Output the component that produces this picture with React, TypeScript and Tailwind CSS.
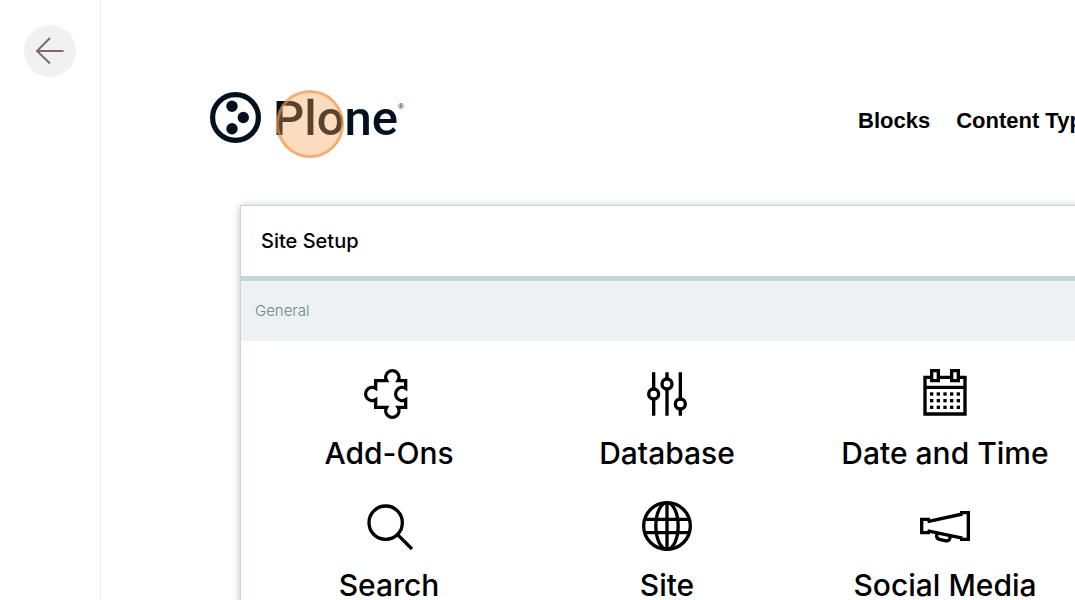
import type { ReactNode } from "react";

type Panel = { label: string; icon: ReactNode };

function PanelIcon({ children }: { children: ReactNode }) {
  return (
    <svg viewBox="0 0 36 36" className="size-[60px]" fill="none" stroke="#000" strokeWidth="2" aria-hidden="true">
      {children}
    </svg>
  );
}

const dotRows = [17, 21, 25];
const dotColumns = [9, 13, 17, 21, 25];

const panels: Panel[] = [
  {
    label: "Add-Ons",
    icon: (
      <path d="M10 10H16.54A4 4 0 1 1 23.46 10H28V14.54A4 4 0 1 0 28 21.46V26H23.46A4 4 0 1 1 16.54 26H10V21.46A4 4 0 1 1 10 14.54Z" />
    ),
  },
  {
    label: "Database",
    icon: (
      <>
        <path d="M10 5V15M10 21V31M18 5V9M18 15V31M26 5V21M26 27V31" />
        <circle cx="10" cy="18" r="3" />
        <circle cx="18" cy="12" r="3" />
        <circle cx="26" cy="24" r="3" />
      </>
    ),
  },
  {
    label: "Date and Time",
    icon: (
      <>
        <path d="M10 8H6V30H30V8H26M14 8H22M6 14H30" />
        <path d="M10 4H14V10H10ZM22 4H26V10H22Z" />
        {dotRows.map((y) =>
          dotColumns.map((x) => <rect key={`${x}-${y}`} x={x} y={y} width="2" height="2" fill="#000" stroke="none" />),
        )}
      </>
    ),
  },
  {
    label: "Search",
    icon: (
      <>
        <circle cx="16" cy="16" r="10" />
        <path d="M23 23L31.8 31.8" />
      </>
    ),
  },
  {
    label: "Site",
    icon: (
      <>
        <circle cx="18" cy="18" r="14" />
        <ellipse cx="18" cy="18" rx="6.7" ry="14" />
        <path d="M18 4V32M5 14H31M5 22H31" />
      </>
    ),
  },
  {
    label: "Social Media",
    icon: (
      <>
        <path d="M9 14H4V22H9M27 10H32V26H27" />
        <path d="M7.5 15.4L28.5 10.8M7.5 20.9L28.5 25.3" />
        <path d="M13.2 22.4L13 23.7Q12.8 25.6 14.6 26L18.6 26.9Q20.4 27.2 20.9 25.4L21.2 24.2" />
      </>
    ),
  },
];

export default function App() {
  return (
    <div className="flex h-screen overflow-hidden bg-white font-['Inter',sans-serif] text-black">
      <aside className="w-[101px] shrink-0 border-r border-[#eeeeee] px-6 pt-[25px]">
        <button type="button" aria-label="Back" className="flex size-[52px] items-center justify-center rounded-full bg-[#f1f1f1]">
          <svg viewBox="0 0 52 52" className="size-[52px]" fill="none" stroke="#826a6a" strokeWidth="2" aria-hidden="true">
            <path d="M39.5 26H13M26 13L13 26L26 38.5" />
          </svg>
        </button>
      </aside>

      <main className="min-w-0 flex-1 overflow-hidden">
        <header className="flex items-center pt-[89px] pl-[109px]">
          <a href="#home" aria-label="Plone home" className="relative flex h-[56px] shrink-0 items-center text-[#03111f]">
            <svg viewBox="0 0 51 51" className="size-[51px]" fill="currentColor" aria-hidden="true">
              <circle cx="25.5" cy="25.5" r="22.9" fill="none" stroke="currentColor" strokeWidth="5.2" />
              <circle cx="22" cy="14.3" r="5.7" />
              <circle cx="33.3" cy="25.5" r="5.7" />
              <circle cx="22" cy="36.7" r="5.7" />
            </svg>
            <span className="pt-1 pl-3 font-['Roboto',sans-serif] text-[49px] leading-[56px] font-medium">Plone</span>
            <span className="-mt-5 font-['Liberation_Sans',sans-serif] text-[8px] leading-4">®</span>
            <span className="absolute top-px left-[66px] size-[68px] rounded-full border-[3px] border-[#ef9148]/60 bg-[#f79e4b]/36" />
          </a>
          <nav className="ml-[454px] flex shrink-0 gap-[26px] pt-2 font-['Liberation_Sans',sans-serif] text-[22px] leading-7 font-bold whitespace-nowrap">
            <a href="#blocks">Blocks</a>
            <a href="#content-types">Content Types</a>
          </nav>
        </header>

        <section className="mt-[60px] ml-[139px] w-max border border-[#c7d5d8] shadow-[0_1px_8px_rgba(0,0,0,0.25)]">
          <h1 className="border-b-[5px] border-[#c7d5d8] px-5 py-5 text-[20px] leading-[30px] font-medium">Site Setup</h1>
          <h2 className="bg-[#edf1f2] px-[14px] py-[15px] text-[15px] leading-[30px] font-light text-[#68878b]">General</h2>
          <div className="grid grid-cols-[repeat(3,278px)] px-[9px] pt-[23px] pb-6">
            {panels.map(({ label, icon }) => (
              <a key={label} href="#panel" className="flex h-[132px] flex-col items-center">
                <PanelIcon>{icon}</PanelIcon>
                <span className="mt-[9px] text-[30px] leading-10 font-medium">{label}</span>
              </a>
            ))}
          </div>
        </section>
      </main>
    </div>
  );
}
